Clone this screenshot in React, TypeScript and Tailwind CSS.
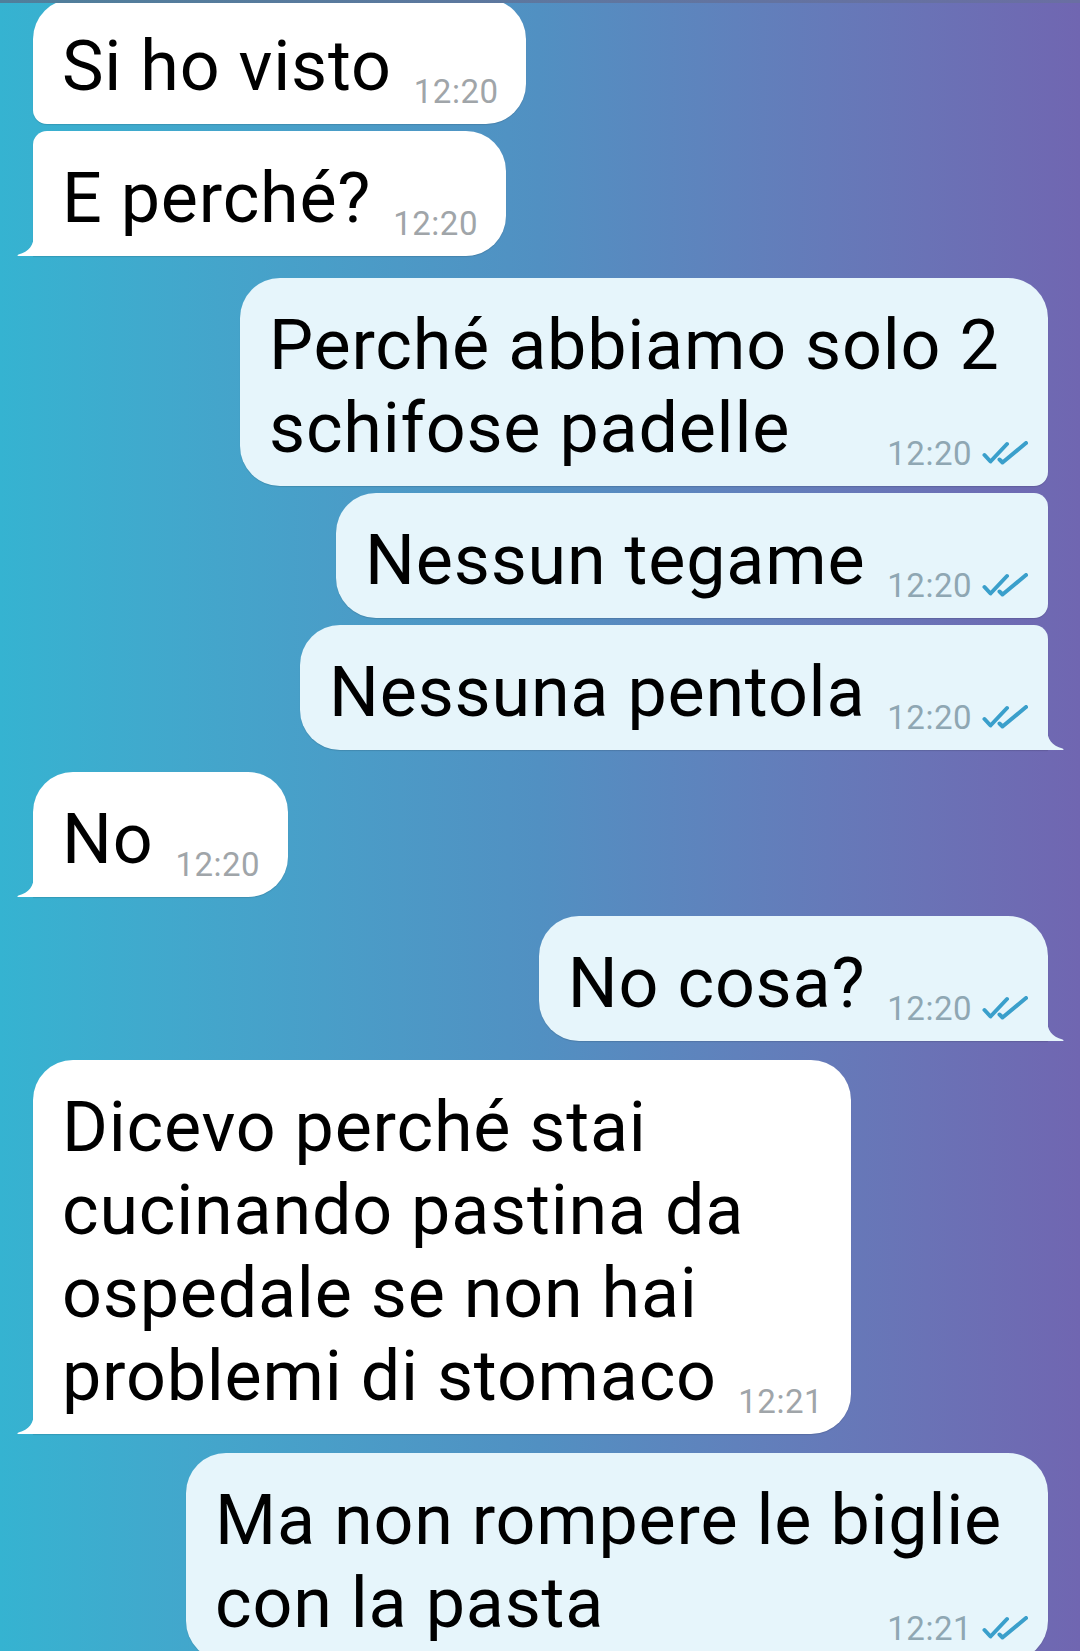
import React from "react";

type Msg = {
  out: boolean;
  lines: string[];
  time: string;
  shape: string;
  gap: string;
  tail?: boolean;
  width?: string;
};

const messages: Msg[] = [
  { out: false, lines: ["Si ho visto"], time: "12:20", shape: "rounded-[40px] rounded-bl-[14px]", gap: "-mt-[1px]" },
  { out: false, lines: ["E perché?"], time: "12:20", shape: "rounded-[40px] rounded-tl-[14px] rounded-bl-none", gap: "mt-[7px]", tail: true },
  {
    out: true,
    lines: ["Perché abbiamo solo 2", "schifose padelle"],
    time: "12:20",
    shape: "rounded-[40px] rounded-br-[14px]",
    gap: "mt-[22px]",
    width: "w-[808px]",
  },
  { out: true, lines: ["Nessun tegame"], time: "12:20", shape: "rounded-[40px] rounded-tr-[14px] rounded-br-[14px]", gap: "mt-[7px]" },
  { out: true, lines: ["Nessuna pentola"], time: "12:20", shape: "rounded-[40px] rounded-tr-[14px] rounded-br-none", gap: "mt-[7px]", tail: true },
  { out: false, lines: ["No"], time: "12:20", shape: "rounded-[40px] rounded-bl-none", gap: "mt-[22px]", tail: true },
  { out: true, lines: ["No cosa?"], time: "12:20", shape: "rounded-[40px] rounded-br-none", gap: "mt-[19px]", tail: true },
  {
    out: false,
    lines: ["Dicevo perché stai", "cucinando pastina da", "ospedale se non hai", "problemi di stomaco"],
    time: "12:21",
    shape: "rounded-[40px] rounded-bl-none",
    gap: "mt-[19px]",
    tail: true,
    width: "w-[818px]",
  },
  {
    out: true,
    lines: ["Ma non rompere le biglie", "con la pasta"],
    time: "12:21",
    shape: "rounded-[40px]",
    gap: "mt-[19px]",
    width: "w-[862px]",
  },
];

const DoubleCheck = () => (
  <svg width="46" height="24" viewBox="0 0 46 24" fill="none" className="ml-[10px] mb-[5px] shrink-0">
    <path d="M2.5 14 L8.5 20.5 L25 3" stroke="#3a9fcb" strokeWidth="4" strokeLinecap="round" strokeLinejoin="round" />
    <path d="M17.5 18.5 L20.5 21.5 L44 2" stroke="#3a9fcb" strokeWidth="4" strokeLinecap="round" strokeLinejoin="round" />
  </svg>
);

const Meta = ({ out, time }: { out: boolean; time: string }) => (
  <div className="flex items-end shrink-0">
    <span className={`text-[33px] leading-none tracking-[0.5px] ${out ? "text-[#8fa7b3]" : "text-[#a0a5a9]"}`}>{time}</span>
    {out && <DoubleCheck />}
  </div>
);

// little curved tail on the last bubble of a group
const Tail = ({ out, color }: { out: boolean; color: string }) =>
  out ? (
    <svg width="19" height="22" viewBox="0 0 19 22" className="absolute bottom-0 -right-[17px]">
      <path d="M0 0 L1 0 C1 11 6 18 16.5 20.4 C18 20.8 17.8 22 16.5 22 L0 22 Z" fill={color} />
    </svg>
  ) : (
    <svg width="19" height="22" viewBox="0 0 19 22" className="absolute bottom-0 -left-[17px]">
      <path d="M19 0 L18 0 C18 11 13 18 2.5 20.4 C1 20.8 1.2 22 2.5 22 L19 22 Z" fill={color} />
    </svg>
  );

const Bubble = ({ m }: { m: Msg }) => {
  const bg = m.out ? "bg-[#e6f5fb]" : "bg-white";
  const pad = m.out ? "pl-[29px] pr-[20px]" : "pl-[29px] pr-[28px]";
  const multi = m.lines.length > 1;
  return (
    <div className={`relative ${m.gap} ${m.out ? "self-end" : "self-start"}`}>
      <div
        className={`${bg} ${m.shape} ${pad} ${m.width ?? ""} pt-[26px] pb-[16px] shadow-[0_1px_1px_rgba(0,0,0,0.12)] ${
          multi ? "grid" : "flex items-end"
        }`}
      >
        <div className={`text-[70px] leading-[83px] tracking-[0.8px] text-black ${multi ? "col-start-1 row-start-1" : ""}`}>
          {m.lines.map((l) => (
            <div key={l} className="whitespace-nowrap">
              {l}
            </div>
          ))}
        </div>
        <div className={multi ? "col-start-1 row-start-1 self-end justify-self-end" : "ml-[22px]"}>
          <Meta out={m.out} time={m.time} />
        </div>
      </div>
      {m.tail && <Tail out={m.out} color={m.out ? "#e6f5fb" : "#ffffff"} />}
    </div>
  );
};

export default function App() {
  return (
    <div
      className="relative w-[1080px] h-[1651px] overflow-hidden bg-linear-to-r from-[#35b3d1] via-[#5190c2] to-[#7066b1]"
      style={{ fontFamily: "Roboto, 'Noto Sans', sans-serif" }}
    >
      <div className="flex flex-col pl-[33px] pr-[32px]">
        {messages.map((m, i) => (
          <Bubble key={i} m={m} />
        ))}
      </div>
      <div className="absolute top-0 left-0 w-full h-[3px] bg-linear-to-r from-[#4f7f9b] to-[#6a6ea2]" />
    </div>
  );
}
